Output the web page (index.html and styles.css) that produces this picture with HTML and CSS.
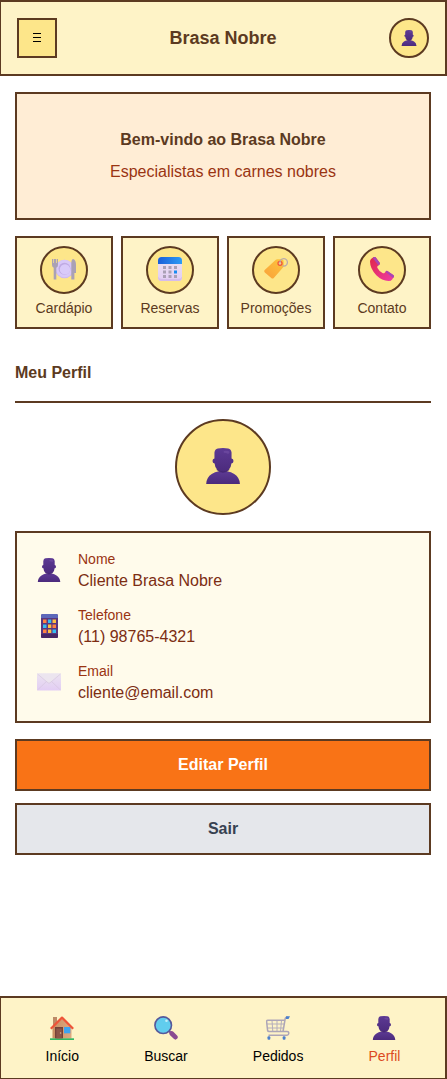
FILE: index.html
```html
<!DOCTYPE html>
<html lang="pt-BR">
<head>
<meta charset="utf-8">
<meta name="viewport" content="width=device-width, initial-scale=1">
<title>Brasa Nobre</title>
<link rel="stylesheet" href="styles.css">
</head>
<body>
<svg class="defs" aria-hidden="true">
  <defs>
    <linearGradient id="gPurple" x1="0" y1="0" x2="0" y2="1"><stop offset="0" stop-color="#5d3a94"/><stop offset="1" stop-color="#4b2a7c"/></linearGradient>
    <linearGradient id="gBlue" x1="0" y1="0" x2="1" y2="0"><stop offset="0" stop-color="#1a5fd8"/><stop offset="1" stop-color="#2d9cf5"/></linearGradient>
    <linearGradient id="gTag" x1="1" y1="0" x2="0" y2="1"><stop offset="0" stop-color="#fdc63c"/><stop offset="1" stop-color="#f9a03a"/></linearGradient>
    <linearGradient id="gPhone" x1="0" y1="0" x2="1" y2="1"><stop offset="0" stop-color="#e02747"/><stop offset="1" stop-color="#ee3da6"/></linearGradient>
    <linearGradient id="gPaper" x1="0" y1="0" x2="0" y2="1"><stop offset="0" stop-color="#ece4f0"/><stop offset="1" stop-color="#e2cdf4"/></linearGradient>
    <linearGradient id="gWall" x1="0" y1="0" x2="1" y2="0"><stop offset="0" stop-color="#c98f62"/><stop offset="1" stop-color="#dea981"/></linearGradient>
    <symbol id="person" viewBox="0 0 24 24">
      <path fill="url(#gPurple)" d="M.8 24Q1 19.600 4.500 17.400 6.500 16 9.300 15.500h5.400q2.800.5 4.800 1.900Q23 19.600 23.300 24z"/>
      <path fill="url(#gPurple)" d="M6.300 3Q6.600.6 8.500.3q3.500-.6 7 0Q17.400.6 17.700 3v4q1.300.2 1.300 1.700t-1.400 1.600q-.2 3-2 4.500-1.600 1.400-3.600 1.400t-3.600-1.400q-1.800-1.500-2-4.500Q5 10.200 5 8.700T6.300 7z"/>
      <path fill="#7450a6" opacity=".6" d="M12.500 2q3-.6 4 .6l-1 1.400q-1.500-.8-3-.8z"/>
      <path fill="none" stroke="#3b1c66" stroke-width=".7" opacity=".6" d="M7.800 14.200q4.200 4 8.400 0"/>
    </symbol>
  </defs>
</svg>

<header class="topbar">
  <button class="menu-button" type="button" aria-label="Menu">
    <svg class="icon-menu" viewBox="0 0 8 9"><path fill="#000" d="M0 0h8v1H0zM0 4h8v1H0zM0 8h8v1H0z"/></svg>
  </button>
  <h1 class="brand">Brasa Nobre</h1>
  <button class="avatar-button" type="button" aria-label="Perfil"><svg class="icon-small"><use href="#person"/></svg></button>
</header>

<main class="content">
  <section class="welcome">
    <h2 class="welcome-title">Bem-vindo ao Brasa Nobre</h2>
    <p class="welcome-text">Especialistas em carnes nobres</p>
  </section>

  <div class="shortcuts">
    <a class="shortcut" href="#cardapio">
      <span class="shortcut-icon"><svg class="icon" viewBox="0 0 24 24">
        <circle cx="12.500" cy="12" r="9.200" fill="#cdb9ef"/><circle cx="12.500" cy="11.500" r="8.700" fill="#d8c8f8"/>
        <circle cx="12.500" cy="11.700" r="6" fill="#bfaae3"/><circle cx="13" cy="12.400" r="5.200" fill="#d9caf9"/>
        <path fill="#aaa1b5" d="M0 2h1.300v4H2V2h2v4h.7V2H6v6q0 2.300-1.700 2.800V22.500H1.700V10.800Q0 10.300 0 8zM19.300 22.500V7q0-5 2-5Q24 3 24 8v8h-1.600v6.500z"/>
      </svg></span>
      <span class="shortcut-label">Cardápio</span>
    </a>
    <a class="shortcut" href="#reservas">
      <span class="shortcut-icon"><svg class="icon" viewBox="0 0 24 24">
        <rect width="24" height="24" rx="3.500" fill="url(#gPaper)"/><path fill="#d5bceb" d="M0 19.500q0 4.500 3.500 4.500h17q3.500 0 3.500-4.500-1 2.500-4 2.500H4Q1 22 0 19.500z"/>
        <path fill="url(#gBlue)" d="M0 7V3.500Q0 0 3.500 0h17Q24 0 24 3.500V7z"/>
        <path fill="#aaa0b5" d="M5 9h3v3H5zM10.500 9h3v3h-3zM16 9h3v3h-3zM5 13.500h3v3H5zM10.500 13.500h3v3h-3zM5 18h3v3H5zM10.500 18h3v3h-3zM16 18h3v3h-3z"/><path fill="#198cf0" d="M16 13.500h3v3h-3z"/>
      </svg></span>
      <span class="shortcut-label">Reservas</span>
    </a>
    <a class="shortcut" href="#promocoes">
      <span class="shortcut-icon"><svg class="icon" viewBox="0 0 24 24">
        <path fill="url(#gTag)" d="M.7 13 11.500 3q.8-.8 2-.8l4.300.1q1.700.1 1.800 1.700l.2 4.500q0 1.200-.8 2L9.800 21q-1.300 1.200-2.500 0L.8 15.400q-1.100-1.100-.1-2.400z"/>
        <circle cx="16" cy="6.300" r="2" fill="#fde08a" stroke="#f0563a" stroke-width="1.300"/>
        <path fill="none" stroke="#b9a9ad" stroke-width="1.200" d="M16 6.500q-.5-3.500 2-4.500 3-1.200 4.800 1.200 1.400 2.500-.3 4.600-1.800 2-4.200 1"/>
      </svg></span>
      <span class="shortcut-label">Promoções</span>
    </a>
    <a class="shortcut" href="#contato">
      <span class="shortcut-icon"><svg class="icon" viewBox="0 0 24 24">
        <path fill="url(#gPhone)" d="M1.300 1.800 3.800.1q1-.6 2 .5l3.700 5q.8 1.200-.2 2.100L7.700 9q-.8.800-.2 1.900 1.600 3.200 5 5.200 1.200.6 2-.2l1.300-1.500q.9-1 2-.2l5.500 3.700q1.200.8.500 2l-1.700 2.500q-1.100 1.600-3.500 1.500Q12 23.800 6.300 18.200 0 11.500 0 4.500q0-1.700 1.300-2.700z"/>
        <path fill="#a747b5" d="M3.800.1q1-.6 2 .5l3.700 5q.8 1.200-.2 2.100l-.8.700L2.800.9zM15.400 14.800l.4-.4q.9-1 2-.2l5.500 3.700q1.200.8.500 2l-.7 1z"/>
      </svg></span>
      <span class="shortcut-label">Contato</span>
    </a>
  </div>

  <h2 class="section-title">Meu Perfil</h2>
  <div class="portrait"><svg class="icon-large"><use href="#person"/></svg></div>

  <dl class="details">
    <div class="detail">
      <svg class="icon"><use href="#person"/></svg>
      <div><dt class="detail-label">Nome</dt><dd class="detail-value">Cliente Brasa Nobre</dd></div>
    </div>
    <div class="detail">
      <svg class="icon" viewBox="0 0 24 24">
        <rect x="4" width="17" height="24" rx="1.500" fill="#59377f"/><path fill="#5d68ba" d="M4 4V1.500Q4 0 5.500 0h14Q21 0 21 1.500V4z"/><path fill="#472765" d="M4 20h17v2.500q0 1.500-1.500 1.500h-14Q4 24 4 22.500z"/>
        <path fill="#ff8242" d="M6 5.500h3.500V9H6zM15.500 10.500H19V14h-3.500zM6 15.500h3.500V19H6z"/><path fill="#35bdf2" d="M11 5.500h3.300V9H11zM6 10.500h3.500V14H6zM15.500 15.500H19V19h-3.500z"/><path fill="#ffc043" d="M15.500 5.500H19V9h-3.500zM11 10.500h3.300V14H11zM11 15.500h3.300V19H11z"/>
      </svg>
      <div><dt class="detail-label">Telefone</dt><dd class="detail-value">(11) 98765-4321</dd></div>
    </div>
    <div class="detail">
      <svg class="icon" viewBox="0 0 24 24">
        <rect y="3.500" width="24" height="17" rx="1" fill="url(#gPaper)"/><path fill="#ece5ef" d="M0 3.500h24L13 12.800q-1 .7-2 0z"/>
        <path fill="none" stroke="#d3c5dc" stroke-width=".6" d="m.5 4 10.500 8.800q1 .7 2 0L23.500 4M.5 20l8.800-8.300M23.500 20l-8.800-8.300"/>
      </svg>
      <div><dt class="detail-label">Email</dt><dd class="detail-value">cliente@email.com</dd></div>
    </div>
  </dl>

  <div class="actions">
    <button class="action action-primary" type="button">Editar Perfil</button>
    <button class="action action-neutral" type="button">Sair</button>
  </div>
</main>

<nav class="tabbar">
  <a class="tab" href="#inicio">
    <svg class="icon" viewBox="0 0 24 24">
      <path fill="#bd8a66" d="M3 1h4v9H3z"/><path fill="url(#gWall)" d="M2.500 11 12 3l9.500 8v11.500h-19z"/>
      <path fill="#34b863" d="M0 22.300h24V24H0z"/><path fill="#754238" d="M5 11h8v11.300H5z"/><path fill="#8c5547" d="M6.300 12.500h5.500v9.800H6.300z"/><circle cx="10.600" cy="17" r=".8" fill="#e0b28b"/>
      <rect x="14" y="11" width="6.300" height="6.300" fill="#3ea4f1"/>
      <path fill="none" stroke="#ee5438" stroke-width="2.200" stroke-linejoin="round" d="M.8 12.800 12 1.600l11.200 11.200"/>
    </svg>
    <span class="tab-label">Início</span>
  </a>
  <a class="tab" href="#buscar">
    <svg class="icon" viewBox="0 0 24 24">
      <path stroke="#725596" stroke-width="2" d="m14.500 14.500 3 3"/><path stroke="#8a4a91" stroke-width="4.600" stroke-linecap="round" d="m17.700 17.500 3.700 3.700"/>
      <circle cx="9.200" cy="9.200" r="8.300" fill="#61cdee" stroke="#56589b" stroke-width="1.600"/><circle cx="12.500" cy="4.800" r="1.300" fill="#c3eef8"/>
    </svg>
    <span class="tab-label">Buscar</span>
  </a>
  <a class="tab" href="#pedidos">
    <svg class="icon" viewBox="0 0 24 24">
      <g fill="none" stroke="#b5aebb" stroke-width="1"><path d="M1 8h17M1.500 12h15.500M6 4.500l.8 11M11 4.500v11M15.500 4.500 14.500 15.500"/></g>
      <path fill="none" stroke="#ada5b7" stroke-width="1.500" stroke-linejoin="round" d="M22 1.200h-1.500q-1 0-1.200 1L17 15.500H3q-1.200 0-1.400-1L.6 5.500q0-1.300 1.300-1.300h17M17 15.500h4q1.800 0 1.800 1.700T21 19.300H2.500"/>
      <path fill="#4c80cc" d="M20 .3h4L22.500 3H20z"/><rect x="1.500" y="20.300" width="2.800" height="3.500" rx="1" fill="#4c80cc"/><rect x="16.700" y="20.300" width="2.800" height="3.500" rx="1" fill="#4c80cc"/>
    </svg>
    <span class="tab-label">Pedidos</span>
  </a>
  <a class="tab tab-current" href="#perfil" aria-current="page">
    <svg class="icon"><use href="#person"/></svg>
    <span class="tab-label">Perfil</span>
  </a>
</nav>
</body>
</html>
```
FILE: styles.css
```css
:root {
  --brown: #5c3a21;
  --cream: #fef3c7;
  --gold: #fde68a;
  --rust: #9a3412;
}

* { box-sizing: border-box; margin: 0; padding: 0; }

body {
  min-height: 100vh;
  display: flex;
  flex-direction: column;
  background: #fff;
  color: var(--brown);
  font: 16px/24px "Liberation Sans", Arial, sans-serif;
}

a { color: inherit; text-decoration: none; }
button { font: inherit; cursor: pointer; }
svg { display: block; flex: none; }

.defs { position: absolute; width: 0; height: 0; }
.icon { width: 24px; height: 24px; }
.icon-small { width: 16px; height: 16px; }
.icon-large { width: 36px; height: 36px; }
.icon-menu { width: 8px; height: 9px; }

.topbar {
  display: flex;
  align-items: center;
  justify-content: space-between;
  padding: 16px;
  background: var(--cream);
  border: 2px solid var(--brown);
  border-left-width: 1px;
}

.menu-button, .avatar-button {
  display: flex;
  align-items: center;
  justify-content: center;
  width: 40px;
  height: 40px;
  padding-bottom: 1px;
  background: var(--gold);
  border: 2px solid var(--brown);
}

.avatar-button { border-radius: 50%; }
.brand { font-size: 18px; line-height: 28px; }

.content {
  flex: 1;
  display: flex;
  flex-direction: column;
  padding: 16px 16px 16px 15px;
}

.welcome {
  display: flex;
  flex-direction: column;
  gap: 8px;
  padding: 34px 16px;
  text-align: center;
  background: #ffedd5;
  border: 2px solid var(--brown);
}

.welcome-title { font-size: 16px; }
.welcome-text { color: var(--rust); }

.shortcuts {
  display: grid;
  grid-template-columns: repeat(4, 1fr);
  gap: 8px;
  margin-top: 16px;
}

.shortcut {
  display: flex;
  flex-direction: column;
  align-items: center;
  gap: 4px;
  padding: 8px;
  background: var(--cream);
  border: 2px solid var(--brown);
}

.shortcut-icon {
  display: flex;
  align-items: center;
  justify-content: center;
  width: 48px;
  height: 48px;
  padding-bottom: 2px;
  background: var(--gold);
  border: 2px solid var(--brown);
  border-radius: 50%;
}

.shortcut-label, .tab-label { font-size: 14px; line-height: 21px; }

.section-title {
  margin-top: 32px;
  padding-bottom: 16px;
  font-size: 16px;
  border-bottom: 2px solid var(--brown);
}

.portrait {
  display: flex;
  align-items: center;
  justify-content: center;
  align-self: center;
  width: 96px;
  height: 96px;
  margin: 16px 0;
  padding-bottom: 2px;
  background: var(--gold);
  border: 2px solid var(--brown);
  border-radius: 50%;
}

.details {
  display: flex;
  flex-direction: column;
  gap: 12px;
  padding: 16px;
  background: #fffbeb;
  border: 2px solid var(--brown);
}

.detail {
  display: flex;
  align-items: center;
  gap: 17px;
  padding-left: 4px;
}

.detail .icon { margin-bottom: 2px; }

.detail-label { color: var(--rust); font-size: 14px; line-height: 20px; }
.detail-value { color: #7c2d12; }

.actions {
  display: flex;
  flex-direction: column;
  gap: 12px;
  margin-top: 16px;
}

.action {
  padding: 12px;
  font-weight: bold;
  border: 2px solid var(--brown);
}

.action-primary { background: #f97316; color: #fff; }
.action-neutral { background: #e5e7eb; color: #374151; }

.tabbar {
  position: sticky;
  bottom: 0;
  display: flex;
  justify-content: space-around;
  padding: 12px 12px 11px;
  background: var(--cream);
  border: solid var(--brown);
  border-width: 2px 2px 1px 1px;
}

.tab {
  display: flex;
  flex-direction: column;
  align-items: center;
  gap: 6px;
  padding-top: 6px;
  color: #000;
}

.tab-current { color: #dc4a1f; }
```
